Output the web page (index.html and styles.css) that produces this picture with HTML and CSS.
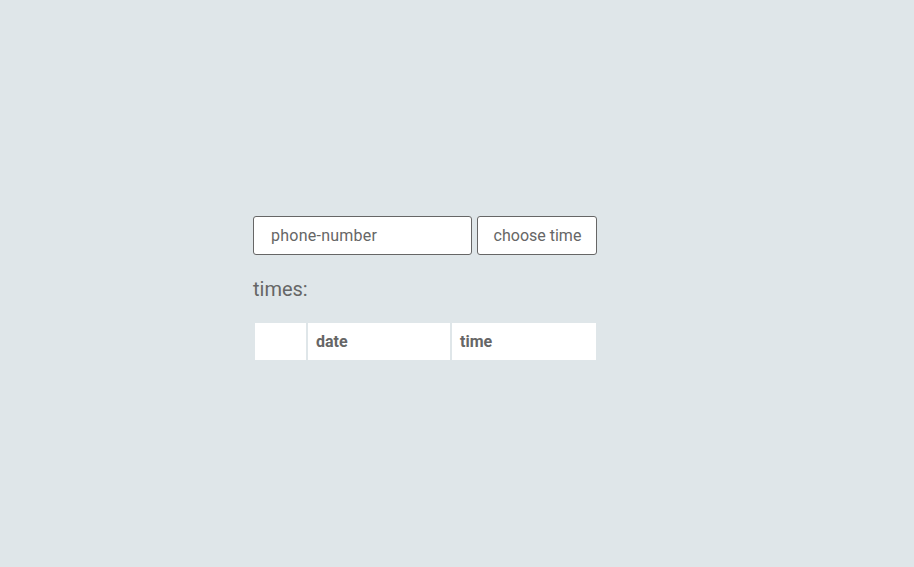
FILE: index.html
```html
<!DOCTYPE html>
<html>
<head>
<meta charset="utf-8">
<link rel="stylesheet" href="styles.css">
</head>
<body>
<main class="wrap">
  <form class="row">
    <input class="phone" type="text" placeholder="phone-number">
    <button class="btn" type="button">choose time</button>
  </form>
  <h2 class="label">times:</h2>
  <table class="times">
    <thead>
      <tr><th class="c0"></th><th class="c1">date</th><th class="c2">time</th></tr>
    </thead>
  </table>
</main>
</body>
</html>
```
FILE: styles.css
```css
html, body { margin: 0; padding: 0; }
body {
  background: #dfe6e9;
  font-family: Roboto, "Liberation Sans", sans-serif;
  color: #666;
  min-height: 567px;
}
.wrap {
  width: 408px;
  margin: 0 auto;
  padding-top: 216px;
}
.row {
  display: flex;
  gap: 5px;
  margin: 0;
}
.phone {
  box-sizing: border-box;
  width: 219px;
  height: 39px;
  border: 1px solid #666;
  border-radius: 3px;
  background: #fff;
  padding: 0 17px;
  font: 16px Roboto, sans-serif;
  letter-spacing: 0.25px;
  color: #666;
  outline: none;
}
.phone::placeholder { color: #666; }
.btn {
  box-sizing: border-box;
  width: 120px;
  height: 39px;
  border: 1px solid #666;
  border-radius: 3px;
  background: #fff;
  font: 16px Roboto, sans-serif;
  color: #666;
  padding: 0 0 0 1px;
}
.label {
  margin: 22px 0 0 0;
  font-weight: 400;
  font-size: 20px;
  line-height: 24px;
  color: #666;
}
.times {
  margin-top: 20px;
  border-spacing: 2px;
  border-collapse: separate;
  width: 345px;
}
.times th {
  box-sizing: border-box;
  background: #fff;
  height: 37px;
  padding: 0 8px;
  text-align: left;
  font-size: 16px;
  font-weight: 700;
  color: #666;
}
.c0 { width: 51px; }
.c1 { width: 142px; }
```
